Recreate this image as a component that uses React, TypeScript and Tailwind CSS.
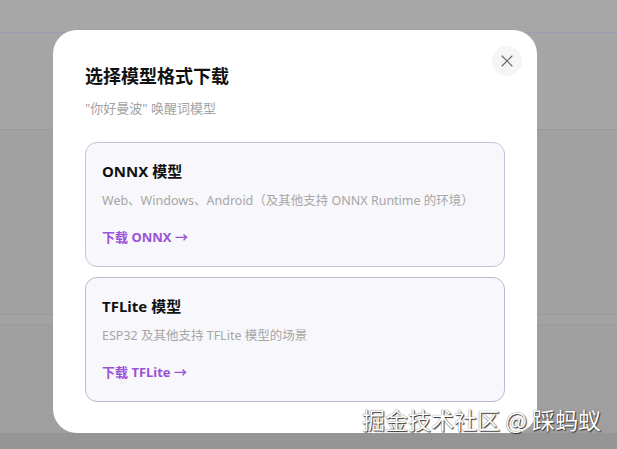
import React from "react";

const font = { fontFamily: '"Noto Sans", "Noto Sans CJK SC", sans-serif' };

function Card({ title, desc, link, borderClass }: { title: string; desc: string; link: string; borderClass: string }) {
  return (
    <div className={`rounded-[12px] border bg-[#f8f7fb] pl-[16px] pr-4 pt-[18px] pb-[19px] ${borderClass}`}>
      <div className="text-[15px] leading-[20px] font-bold text-[#111111]">{title}</div>
      <div className="mt-[11px] text-[12.5px] leading-[18px] text-[#a6a6a6]">{desc}</div>
      <div className="mt-[17px] text-[13px] leading-[20px] font-bold text-[#9b52d6]">{link}</div>
    </div>
  );
}

export default function App() {
  return (
    <div className="relative h-[449px] w-[617px] overflow-hidden bg-[#a2a2a2]" style={font}>
      {/* dimmed background page */}
      <div className="flex h-full flex-col">
        <div className="h-[32px] bg-[#a7a7a7]" />
        <div className="h-[1px] bg-[#9c9ab8]" />
        <div className="h-[97px] border-b border-[#999999] bg-[#a5a5a5]" />
        <div className="h-[184px] bg-[#a1a1a1]" />
        <div className="h-[11px] border-y border-[#9a9a9a] bg-[#a3a3a3]" />
        <div className="flex-1 bg-[#9f9f9f]" />
      </div>
      <div className="absolute inset-x-0 bottom-0 h-[16px] bg-[#959595]" />

      {/* modal */}
      <div className="absolute left-[53px] top-[30px] w-[484px] rounded-[24px] bg-white px-[32px] pt-[33px] pb-[31px]">
        <div className="text-[18px] leading-[26px] font-bold text-[#111111]">选择模型格式下载</div>
        <div className="mt-[9px] text-[13px] leading-[20px] text-[#a3a3a3]">"你好曼波" 唤醒词模型</div>
        <div className="mt-[24px] flex flex-col gap-[10px]">
          <Card
            title="ONNX 模型"
            desc="Web、Windows、Android（及其他支持 ONNX Runtime 的环境）"
            link="下载 ONNX →"
            borderClass="border-[#cbbfdc]"
          />
          <Card
            title="TFLite 模型"
            desc="ESP32 及其他支持 TFLite 模型的场景"
            link="下载 TFLite →"
            borderClass="border-[#bbb6d8]"
          />
        </div>
        <button className="absolute right-[15px] top-[16px] flex h-[30px] w-[30px] items-center justify-center rounded-full bg-[#f5f5f5]">
          <svg width="12" height="12" viewBox="0 0 12 12" fill="none" stroke="#666666" strokeWidth="1.1" strokeLinecap="round">
            <path d="M1 1L11 11M11 1L1 11" />
          </svg>
        </button>
      </div>

      {/* watermark */}
      <div
        className="absolute left-[362px] top-[404px] text-[23px] leading-[30px] text-white [text-shadow:1px_1px_1px_#333,0_0_1px_#555]"
        style={{ fontFamily: '"Noto Sans CJK SC", sans-serif' }}
      >
        掘金技术社区 @ 踩蚂蚁
      </div>
    </div>
  );
}
